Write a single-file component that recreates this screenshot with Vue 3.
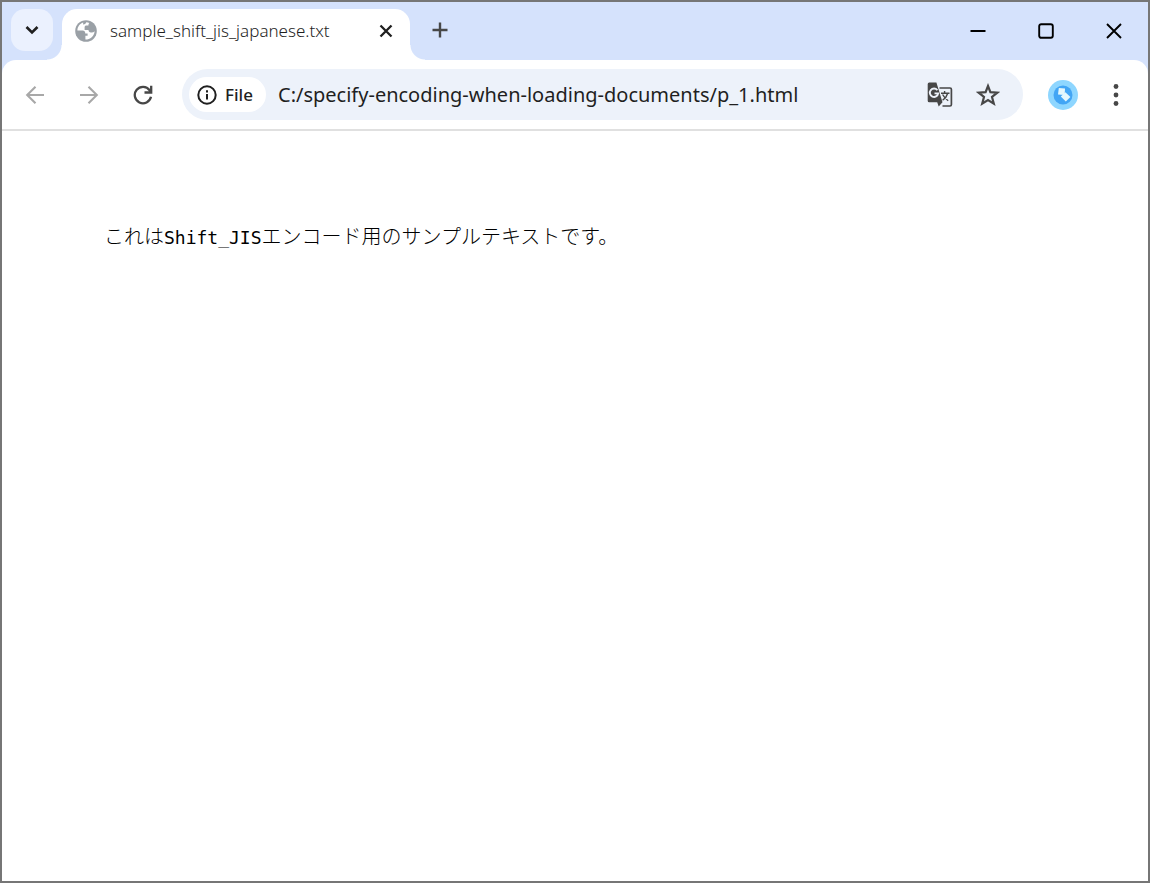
<script setup>
import { ref } from 'vue'

const title = 'sample_shift_jis_japanese.txt'
const address = ref('C:/specify-encoding-when-loading-documents/p_1.html')
</script>

<template>
  <div class="window">
    <header class="strip">
      <button class="tab-search" aria-label="Search tabs">
        <svg width="16" height="16" viewBox="0 0 16 16"><path d="M2.500 5 8 10.500 13.500 5" fill="none" stroke="#1f1f1f" stroke-width="2.600" /></svg>
      </button>
      <div class="tab">
        <svg class="globe" width="22" height="22" viewBox="0 0 22 22">
          <circle cx="11" cy="11" r="10.800" fill="#9aa0a6" />
          <path d="M8.200 2.600C4.800 3.700 2.400 6.900 2.400 10.600h5.200c1.700 0 2.700 1.300 2.700 2.900h2.300v2.300h-2.200v3.800c4.900 0 9-3.800 9.200-8.400-.9 1-2.200 1.400-3.600 1.200-1.800-.2-2.400-1.200-2.500-2.500H9.600V7.100c0-1.100.8-1.700 1.900-1.700h1.900c0-1 .3-1.900.9-2.500-.9-.4-1.900-.6-3-.6-.8 1.500-1.700 2.300-3.200 2.200z" fill="#fff" />
        </svg>
        <span class="title">{{ title }}</span>
        <button class="close-tab" aria-label="Close tab">
          <svg width="14" height="14" viewBox="0 0 14 14"><path d="M1.500 1.500 12.500 12.500M12.500 1.500 1.500 12.500" stroke="#1f1f1f" stroke-width="2.300" /></svg>
        </button>
      </div>
      <button class="new-tab" aria-label="New tab">
        <svg width="16" height="16" viewBox="0 0 16 16"><path d="M8 .5v15M.5 8h15" stroke="#474747" stroke-width="2.400" /></svg>
      </button>
      <div class="controls">
        <button aria-label="Minimize"><svg width="16" height="16" viewBox="0 0 16 16"><path d="M.5 8h15" stroke="#000" stroke-width="2" /></svg></button>
        <button aria-label="Maximize"><svg width="16" height="16" viewBox="0 0 16 16"><rect x="1.200" y="1.200" width="13.600" height="13.600" rx="2" fill="none" stroke="#000" stroke-width="1.900" /></svg></button>
        <button aria-label="Close"><svg width="16" height="16" viewBox="0 0 16 16"><path d="M1 1 15 15M15 1 1 15" stroke="#000" stroke-width="1.900" /></svg></button>
      </div>
    </header>
    <div class="bar-back">
      <nav class="toolbar">
        <button class="nav" aria-label="Back">
          <svg width="20" height="20" viewBox="0 0 20 20"><path d="M19 10H2M10.500 1.800 2.200 10l8.300 8.200" fill="none" stroke="#a8a8a8" stroke-width="2.100" /></svg>
        </button>
        <button class="nav" aria-label="Forward">
          <svg width="20" height="20" viewBox="0 0 20 20"><path d="M1 10h17M9.500 1.800 17.800 10l-8.300 8.200" fill="none" stroke="#a8a8a8" stroke-width="2.100" /></svg>
        </button>
        <button class="nav" aria-label="Reload">
          <svg width="20" height="20" viewBox="0 0 20 20"><path d="M18 11.800A8.200 8.200 0 1 1 16.600 5.200L18 7M18.200.8v6.700h-6.700" fill="none" stroke="#474747" stroke-width="2.300" /></svg>
        </button>
        <div class="omnibox">
          <button class="chip">
            <svg width="20" height="20" viewBox="0 0 20 20"><circle cx="10" cy="10" r="8.700" fill="none" stroke="#1f1f1f" stroke-width="2" /><path d="M10 9v5.600M10 5.300v2.100" stroke="#1f1f1f" stroke-width="2" /></svg>
            <span>File</span>
          </button>
          <input v-model="address" aria-label="Address" spellcheck="false" />
          <button class="action" aria-label="Translate this page">
            <svg width="26" height="26" viewBox="0 0 26 26">
              <path d="M12.500 6H23q1.400 0 1.400 1.400v15.200q0 1.400-1.400 1.400h-7.500" fill="none" stroke="#474747" stroke-width="1.700" />
              <path d="M2.200.5h7.200L15.500 20.200 11.700 24.500 10.200 20.200h-8Q.7 20.200.7 18.700V2Q.7.500 2.200.5z" fill="#474747" />
              <path d="M14 11.200h8.500M17.600 9v2.200M20.600 11.500c-.8 3-2.700 5.200-5 6.800M15.600 12.500c1.400 2.600 3.300 4.600 5.600 6.200" fill="none" stroke="#474747" stroke-width="1.400" />
              <path d="M10.400 8.200A4.200 4.200 0 1 0 11.200 11.400H7.500" fill="none" stroke="#edf2fa" stroke-width="1.900" />
            </svg>
          </button>
          <button class="action" aria-label="Bookmark this page">
            <svg width="24" height="24" viewBox="0 0 24 24"><path d="M12 3 14.400 9.200 21.300 9.700 16 14 17.800 20.700 12 17.100 6.200 20.700 8 14 2.700 9.700 9.600 9.200z" fill="none" stroke="#474747" stroke-width="2.200" /></svg>
          </button>
        </div>
        <button class="profile" aria-label="Profile">
          <svg width="30" height="30" viewBox="0 0 30 30">
            <circle cx="15" cy="15" r="15" fill="#8ed6ff" /><circle cx="15" cy="15" r="9.500" fill="#42a5f5" />
            <path d="M10.800 8 17 8.600 16.600 15 10 14.400z" fill="#e4f7fd" /><path d="M17.400 12.200 22.400 17 17.800 21.600 12.800 16.600z" fill="#e4f7fd" />
          </svg>
        </button>
        <button class="menu" aria-label="Menu">
          <svg width="6" height="22" viewBox="0 0 6 22" fill="#474747"><circle cx="3" cy="2.500" r="2.400" /><circle cx="3" cy="11" r="2.400" /><circle cx="3" cy="19.500" r="2.400" /></svg>
        </button>
      </nav>
    </div>
    <main lang="ja">
      <p>これは<span class="latin">Shift_JIS</span>エンコード用のサンプルテキストです。</p>
    </main>
  </div>
</template>

<style>
body { margin: 0; }
</style>

<style scoped>
.window {
  box-sizing: border-box;
  min-height: 100vh;
  border: 2px solid #767676;
  background: #fff;
  font-family: "Noto Sans", "Open Sans", sans-serif;
  color: #1f1f1f;
}
button {
  display: flex;
  align-items: center;
  justify-content: center;
  border: 0;
  padding: 0;
  background: none;
  font: inherit;
  color: inherit;
  flex: none;
}
svg { display: block; flex: none; }
.strip {
  display: flex;
  align-items: flex-start;
  height: 58px;
  background: #d5e2fc;
}
.tab-search {
  width: 42px;
  height: 42px;
  margin: 7px 9px 0;
  border-radius: 14px;
  background: #ebf1fe;
}
.tab {
  position: relative;
  box-sizing: border-box;
  display: flex;
  align-items: center;
  width: 348px;
  height: 51px;
  margin-top: 7px;
  padding: 0 14px 8px 13px;
  border-radius: 15px 15px 0 0;
  background: #fff;
}
.tab::before, .tab::after {
  content: "";
  position: absolute;
  bottom: 0;
  width: 15px;
  height: 15px;
}
.tab::before { right: 100%; background: radial-gradient(circle at 0 0, transparent 14px, #fff 15px); }
.tab::after { left: 100%; background: radial-gradient(circle at 100% 0, transparent 14px, #fff 15px); }
.title {
  flex: 1;
  margin-left: 13px;
  font-size: 17px;
  font-weight: 300;
  line-height: 24px;
  white-space: nowrap;
}
.close-tab { width: 20px; height: 20px; }
.new-tab { width: 40px; height: 42px; margin: 7px 0 0 10px; }
.controls { display: flex; margin-left: auto; }
.controls button { width: 68px; height: 58px; }
.bar-back { background: #d5e2fc; }
.toolbar {
  display: flex;
  align-items: center;
  height: 69px;
  padding: 0 18px 0 6px;
  border-bottom: 2px solid #e0e0e0;
  border-radius: 14px 14px 0 0;
  background: #fff;
}
.nav { width: 54px; height: 54px; }
.omnibox {
  flex: 1;
  min-width: 0;
  display: flex;
  align-items: center;
  height: 51px;
  margin: 0 25px 0 12px;
  border-radius: 26px;
  background: #edf2fa;
}
.chip {
  justify-content: flex-start;
  gap: 8px;
  width: 77px;
  height: 35px;
  margin-left: 7px;
  padding-left: 8px;
  border-radius: 18px;
  background: #fff;
  font-size: 17px;
  font-weight: 500;
}
input {
  flex: 1;
  min-width: 0;
  margin-left: 12px;
  padding: 0;
  border: 0;
  outline: 0;
  background: none;
  font-family: "Noto Sans", sans-serif;
  font-size: 20px;
  color: #1f1f1f;
}
.action { width: 48px; height: 48px; }
.action:last-child { margin-right: 11px; }
.profile { width: 30px; height: 30px; }
.menu { width: 28px; height: 40px; margin-left: 24px; }
main { padding: 90px 102px; }
main > p {
  margin: 0;
  font-family: "Noto Sans CJK JP", sans-serif;
  font-size: 20px;
  font-weight: 300;
  line-height: 30px;
  color: #000;
}
.latin {
  font-family: "DejaVu Sans Mono", monospace;
  font-size: 18px;
  font-weight: 400;
}
</style>
